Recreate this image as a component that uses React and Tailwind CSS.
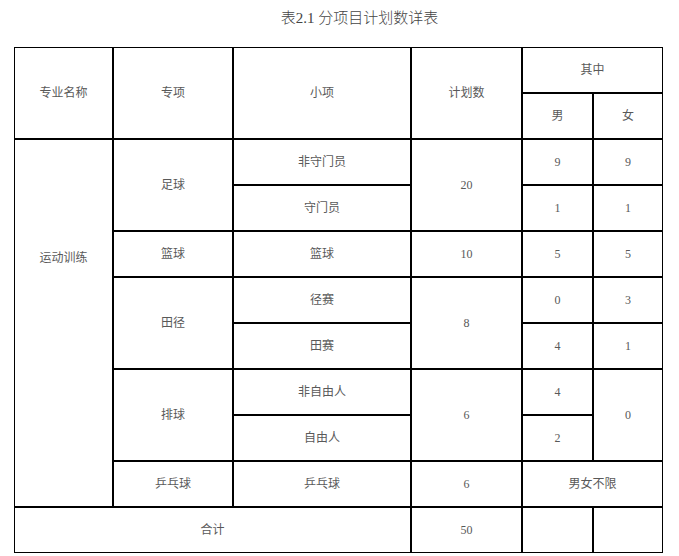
const cells = [
  // header
  { t: "专业名称", c: "col-start-1 row-start-1 row-span-2" },
  { t: "专项", c: "col-start-2 row-start-1 row-span-2" },
  { t: "小项", c: "col-start-3 row-start-1 row-span-2" },
  { t: "计划数", c: "col-start-4 row-start-1 row-span-2" },
  { t: "其中", c: "col-start-5 col-span-2 row-start-1" },
  { t: "男", c: "col-start-5 row-start-2" },
  { t: "女", c: "col-start-6 row-start-2" },
  // 运动训练 (text sits higher than the cell centre)
  { t: "运动训练", c: "col-start-1 row-start-3 row-span-8 pb-[130px]" },
  // 足球
  { t: "足球", c: "col-start-2 row-start-3 row-span-2" },
  { t: "非守门员", c: "col-start-3 row-start-3" },
  { t: "守门员", c: "col-start-3 row-start-4" },
  { t: "20", c: "col-start-4 row-start-3 row-span-2" },
  { t: "9", c: "col-start-5 row-start-3" },
  { t: "9", c: "col-start-6 row-start-3" },
  { t: "1", c: "col-start-5 row-start-4" },
  { t: "1", c: "col-start-6 row-start-4" },
  // 篮球
  { t: "篮球", c: "col-start-2 row-start-5" },
  { t: "篮球", c: "col-start-3 row-start-5" },
  { t: "10", c: "col-start-4 row-start-5" },
  { t: "5", c: "col-start-5 row-start-5" },
  { t: "5", c: "col-start-6 row-start-5" },
  // 田径
  { t: "田径", c: "col-start-2 row-start-6 row-span-2" },
  { t: "径赛", c: "col-start-3 row-start-6" },
  { t: "田赛", c: "col-start-3 row-start-7" },
  { t: "8", c: "col-start-4 row-start-6 row-span-2" },
  { t: "0", c: "col-start-5 row-start-6" },
  { t: "3", c: "col-start-6 row-start-6" },
  { t: "4", c: "col-start-5 row-start-7" },
  { t: "1", c: "col-start-6 row-start-7" },
  // 排球
  { t: "排球", c: "col-start-2 row-start-8 row-span-2" },
  { t: "非自由人", c: "col-start-3 row-start-8" },
  { t: "自由人", c: "col-start-3 row-start-9" },
  { t: "6", c: "col-start-4 row-start-8 row-span-2" },
  { t: "4", c: "col-start-5 row-start-8" },
  { t: "2", c: "col-start-5 row-start-9" },
  { t: "0", c: "col-start-6 row-start-8 row-span-2" },
  // 乒乓球
  { t: "乒乓球", c: "col-start-2 row-start-10" },
  { t: "乒乓球", c: "col-start-3 row-start-10" },
  { t: "6", c: "col-start-4 row-start-10" },
  { t: "男女不限", c: "col-start-5 col-span-2 row-start-10" },
  // 合计
  { t: "合计", c: "col-start-1 col-span-3 row-start-11" },
  { t: "50", c: "col-start-4 row-start-11" },
  { t: "", c: "col-start-5 row-start-11" },
  { t: "", c: "col-start-6 row-start-11" },
];

export default function App() {
  return (
    <div className="w-[679px] h-[556px] bg-white overflow-hidden antialiased">
      <div className="h-[47px] pt-[8px] pl-[40px] text-center text-[15px] leading-[20px] text-[#444] font-['Liberation_Serif','Noto_Sans_CJK_SC',serif] font-light">
        表2.1 分项目计划数详表
      </div>
      <div className="ml-[14px] w-[649px] border border-black bg-black grid grid-cols-[97px_118px_176px_109px_69px_68px] grid-rows-[repeat(11,44px)] gap-[2px] text-[12px] text-[#595959] font-['Liberation_Serif','Noto_Sans_CJK_SC',serif]">
        {cells.map((cell, i) => (
          <div
            key={i}
            className={`${cell.c} bg-white flex items-center justify-center`}
          >
            {cell.t}
          </div>
        ))}
      </div>
    </div>
  );
}
